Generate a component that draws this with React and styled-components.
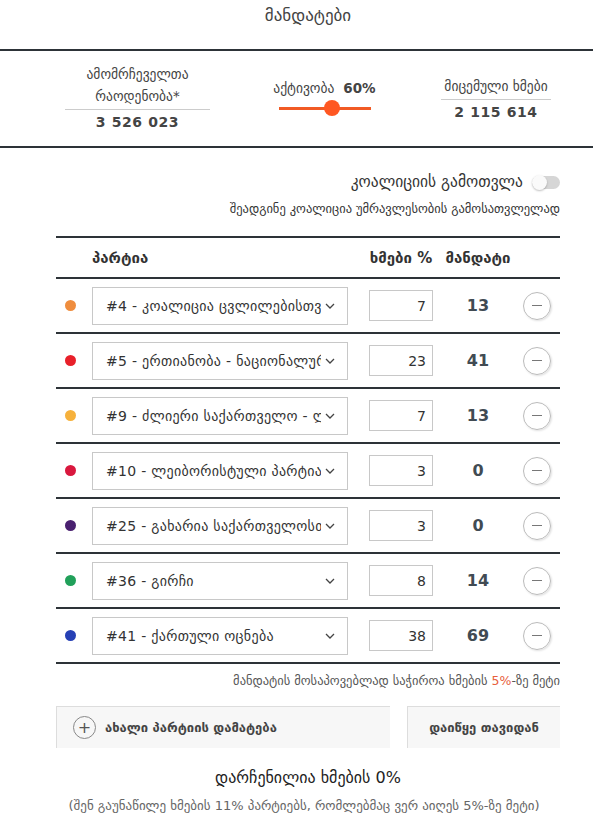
import React from "react";
import styled, { createGlobalStyle } from "styled-components";

const GlobalStyle = createGlobalStyle`
  body {
    margin: 0;
    background: #fff;
    font-family: "DejaVu Sans", "Noto Sans", sans-serif;
    color: #3a3f44;
  }
`;

const Page = styled.div`
  width: 593px;
  overflow: hidden;
`;

const Title = styled.h1`
  margin: 0;
  padding: 5px 0 0 56px;
  width: 504px;
  height: 44px;
  text-align: center;
  font-size: 17px;
  font-weight: normal;
  color: #444;
`;

const StatsBar = styled.section`
  border-top: 2px solid #2d3338;
  border-bottom: 2px solid #2d3338;
  height: 95px;
  display: flex;
  align-items: center;
  justify-content: space-between;
  padding: 0 42px 0 65px;
`;

const Stat = styled.div`
  width: ${(p) => p.$w}px;
  text-align: center;
  margin-top: ${(p) => p.$top || 0}px;
`;

const StatLabel = styled.div`
  font-size: 13.5px;
  line-height: 22px;
  color: #444;
  border-bottom: 1px solid #ccc;
  padding-bottom: 2px;
`;

const StatValue = styled.div`
  font-size: 14px;
  font-weight: bold;
  letter-spacing: 0.6px;
  color: #444;
  margin-top: 4px;
`;

const Activity = styled.div`
  display: flex;
  flex-direction: column;
  align-items: center;
  margin-left: -2px;
  margin-top: -8px;
`;

const ActivityLabel = styled.div`
  font-size: 13.5px;
  color: #444;
  b {
    margin-left: 9px;
    font-weight: bold;
  }
`;

const Slider = styled.div`
  position: relative;
  width: 92px;
  height: 3px;
  background: #f15a24;
  margin-top: 11px;
  &::after {
    content: "";
    position: absolute;
    left: 45px;
    top: -7px;
    width: 16px;
    height: 16px;
    border-radius: 50%;
    background: #ff5722;
  }
`;

const Content = styled.main`
  margin-left: 56px;
  width: 504px;
`;

const CoalitionRow = styled.div`
  display: flex;
  justify-content: flex-end;
  align-items: center;
  gap: 9px;
  margin-top: 25px;
  font-size: 15.5px;
  color: #333;
`;

const Toggle = styled.span`
  position: relative;
  width: 28px;
  height: 13px;
  border-radius: 7px;
  background: #d6d6d6;
  &::after {
    content: "";
    position: absolute;
    left: 0;
    top: -1px;
    width: 15px;
    height: 15px;
    border-radius: 50%;
    background: #fafafa;
    box-shadow: 0 1px 2px rgba(0, 0, 0, 0.25);
  }
`;

const Hint = styled.div`
  text-align: right;
  font-size: 12.5px;
  color: #333;
  margin-top: 10px;
`;

const Table = styled.div`
  margin-top: 20px;
  border-top: 2px solid #2d3338;
`;

const Row = styled.div`
  display: grid;
  grid-template-columns: 36px 256px 21px 64px 18px 54px 1fr;
  align-items: center;
  height: ${(p) => (p.$head ? 39 : 53)}px;
  border-bottom: 2px solid #2d3338;
`;

const HeadCell = styled.div`
  grid-column: ${(p) => p.$col};
  margin: 0 ${(p) => (p.$centered ? -24 : 0)}px;
  text-align: ${(p) => (p.$centered ? "center" : "left")};
  font-weight: bold;
  font-size: 15px;
  color: #333;
  white-space: nowrap;
`;

const Dot = styled.span`
  justify-self: center;
  margin-left: -8px;
  width: 11px;
  height: 11px;
  border-radius: 50%;
  background: ${(p) => p.$color};
`;

const Select = styled.div`
  height: 36px;
  border: 1px solid #c8c8c8;
  display: flex;
  align-items: center;
  justify-content: space-between;
  padding: 0 12px 0 13px;
  font-size: 14px;
  color: #333;
  overflow: hidden;
  white-space: nowrap;
  span {
    overflow: hidden;
    flex: 1;
    letter-spacing: 0.3px;
  }
  svg {
    flex: none;
    margin-left: 4px;
  }
`;

const VoteInput = styled.div`
  grid-column: 4;
  height: 31px;
  border: 1px solid #c8c8c8;
  box-sizing: border-box;
  display: flex;
  align-items: center;
  justify-content: flex-end;
  padding-right: 6px;
  font-size: 14px;
  color: #333;
`;

const Seats = styled.div`
  grid-column: 6;
  text-align: center;
  font-weight: bold;
  font-size: 16px;
  color: #414b53;
`;

const RemoveBtn = styled.span`
  justify-self: end;
  margin-right: 9px;
  width: 26px;
  height: 26px;
  border-radius: 50%;
  border: 1px solid #bbb;
  box-shadow: 1px 1px 2px rgba(0, 0, 0, 0.12);
  display: flex;
  align-items: center;
  justify-content: center;
  &::before {
    content: "";
    width: 10px;
    height: 1px;
    background: #777;
  }
`;

const Note = styled.div`
  text-align: right;
  font-size: 12.5px;
  color: #555;
  margin-top: 9px;
  em {
    font-style: normal;
    color: #e8603c;
  }
`;

const Actions = styled.div`
  display: flex;
  justify-content: space-between;
  margin-top: 18px;
`;

const ActionBtn = styled.div`
  width: ${(p) => p.$w}px;
  height: 42px;
  background: #f7f7f7;
  border-top: 1px solid #ddd;
  border-left: 1px solid #ddd;
  display: flex;
  align-items: center;
  justify-content: ${(p) => (p.$center ? "center" : "flex-start")};
  gap: 9px;
  padding-left: ${(p) => (p.$center ? 0 : 16)}px;
  box-sizing: border-box;
  font-weight: bold;
  font-size: 13px;
  color: #444;
`;

const PlusIcon = styled.span`
  width: 21px;
  height: 21px;
  border-radius: 50%;
  border: 1px solid #888;
  display: flex;
  align-items: center;
  justify-content: center;
  font-size: 16px;
  font-weight: normal;
  color: #555;
`;

const Remaining = styled.div`
  text-align: center;
  font-size: 16px;
  color: #222;
  margin-top: 20px;
`;

const Footnote = styled.div`
  text-align: center;
  font-size: 13px;
  color: #666;
  margin-top: 11px;
  margin-left: -8px;
`;

const Chevron = () => (
  <svg width="10" height="6" viewBox="0 0 10 6">
    <polyline points="1,1 5,5 9,1" fill="none" stroke="#444" strokeWidth="1.3" />
  </svg>
);

const parties = [
  { color: "#ef8d3e", name: "#4 - კოალიცია ცვლილებისთვის", votes: 7, seats: 13 },
  { color: "#e8202a", name: "#5 - ერთიანობა - ნაციონალური მოძრაობა", votes: 23, seats: 41 },
  { color: "#f6b13c", name: "#9 - ძლიერი საქართველო - ლელო", votes: 7, seats: 13 },
  { color: "#d9183e", name: "#10 - ლეიბორისტული პარტია", votes: 3, seats: 0 },
  { color: "#4a2170", name: "#25 - გახარია საქართველოსთვის", votes: 3, seats: 0 },
  { color: "#21a05a", name: "#36 - გირჩი", votes: 8, seats: 14 },
  { color: "#2640b5", name: "#41 - ქართული ოცნება", votes: 38, seats: 69 },
];

const App = () => {
  return (
    <Page>
      <GlobalStyle />
      <Title>მანდატები</Title>

      <StatsBar>
        <Stat $w={145} $top={-4}>
          <StatLabel>
            ამომრჩეველთა
            <br />
            რაოდენობა*
          </StatLabel>
          <StatValue>3 526 023</StatValue>
        </Stat>
        <Activity>
          <ActivityLabel>
            აქტივობა<b>60%</b>
          </ActivityLabel>
          <Slider />
        </Activity>
        <Stat $w={110} $top={-2}>
          <StatLabel>მიცემული ხმები</StatLabel>
          <StatValue>2 115 614</StatValue>
        </Stat>
      </StatsBar>

      <Content>
        <CoalitionRow>
          კოალიციის გამოთვლა
          <Toggle />
        </CoalitionRow>
        <Hint>შეადგინე კოალიცია უმრავლესობის გამოსათვლელად</Hint>

        <Table>
          <Row $head>
            <HeadCell $col="2">პარტია</HeadCell>
            <HeadCell $col="4" $centered>ხმები %</HeadCell>
            <HeadCell $col="6" $centered>მანდატი</HeadCell>
          </Row>
          {parties.map((p) => (
            <Row key={p.name}>
              <Dot $color={p.color} />
              <Select>
                <span>{p.name}</span>
                <Chevron />
              </Select>
              <VoteInput>{p.votes}</VoteInput>
              <Seats>{p.seats}</Seats>
              <RemoveBtn />
            </Row>
          ))}
        </Table>

        <Note>
          მანდატის მოსაპოვებლად საჭიროა ხმების <em>5%</em>-ზე მეტი
        </Note>

        <Actions>
          <ActionBtn $w={334}>
            <PlusIcon>+</PlusIcon>
            ახალი პარტიის დამატება
          </ActionBtn>
          <ActionBtn $w={153} $center>
            დაიწყე თავიდან
          </ActionBtn>
        </Actions>

        <Remaining>დარჩენილია ხმების 0%</Remaining>
        <Footnote>
          (შენ გაუნაწილე ხმების 11% პარტიებს, რომლებმაც ვერ აიღეს 5%-ზე მეტი)
        </Footnote>
      </Content>
    </Page>
  );
};

export default App;
